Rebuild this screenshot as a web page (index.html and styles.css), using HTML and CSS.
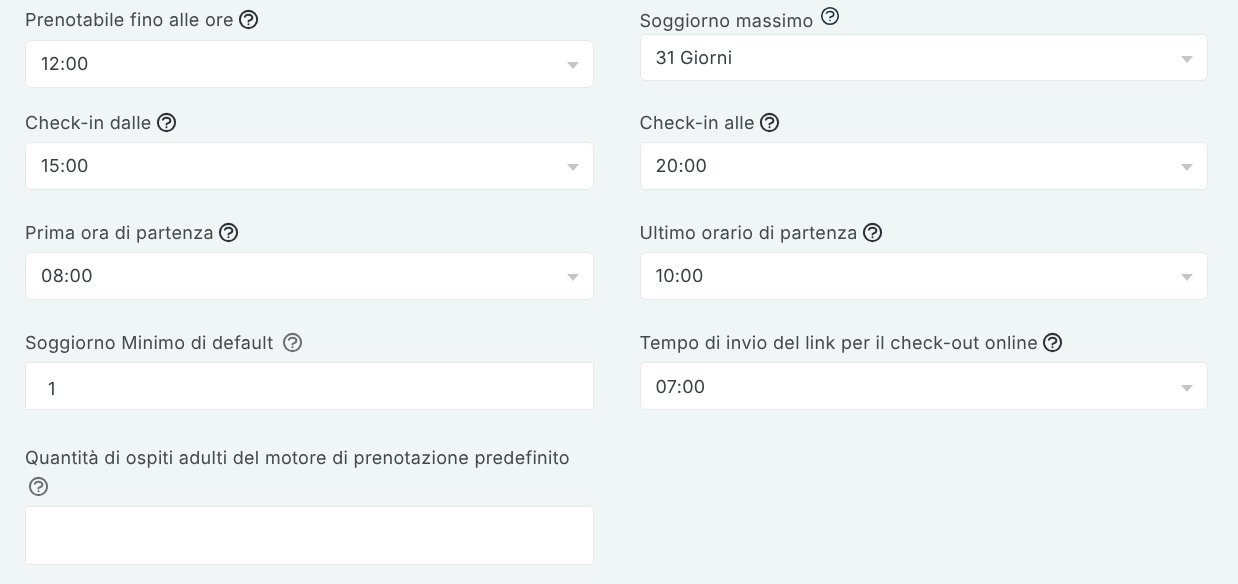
FILE: index.html
```html
<!DOCTYPE html>
<html lang="it">
<head>
<meta charset="utf-8">
<title>Impostazioni</title>
<link rel="stylesheet" href="styles.css">
</head>
<body>
<svg class="defs" aria-hidden="true"><symbol id="help" viewBox="0 0 24 24"><path fill="none" stroke="currentColor" stroke-linecap="round" stroke-linejoin="round" d="M8.228 9c.549-1.165 2.03-2 3.772-2 2.21 0 4 1.343 4 3 0 1.4-1.278 2.575-3.006 2.907-.542.104-.994.54-.994 1.093m0 3h.01M21 12a9 9 0 11-18 0 9 9 0 0118 0z"/></symbol></svg>
<main class="form">
  <div class="field first-left">
    <label class="label">Prenotabile fino alle ore <svg class="icon"><use href="#help"/></svg></label>
    <div class="select"><span>12:00</span><i class="arrow"></i></div>
  </div>
  <div class="field first-right">
    <label class="label">Soggiorno massimo <svg class="icon raised"><use href="#help"/></svg></label>
    <div class="select short"><span>31 Giorni</span><i class="arrow"></i></div>
  </div>
  <div class="field row2">
    <label class="label">Check-in dalle <svg class="icon"><use href="#help"/></svg></label>
    <div class="select"><span>15:00</span><i class="arrow"></i></div>
  </div>
  <div class="field row2">
    <label class="label">Check-in alle <svg class="icon"><use href="#help"/></svg></label>
    <div class="select"><span>20:00</span><i class="arrow"></i></div>
  </div>
  <div class="field row3">
    <label class="label">Prima ora di partenza <svg class="icon"><use href="#help"/></svg></label>
    <div class="select"><span>08:00</span><i class="arrow"></i></div>
  </div>
  <div class="field row3">
    <label class="label">Ultimo orario di partenza <svg class="icon"><use href="#help"/></svg></label>
    <div class="select"><span>10:00</span><i class="arrow"></i></div>
  </div>
  <div class="field row3">
    <label class="label">Soggiorno Minimo di default <svg class="icon muted spaced"><use href="#help"/></svg></label>
    <div class="input"><span>1</span></div>
  </div>
  <div class="field row3">
    <label class="label">Tempo di invio del link per il check-out online <svg class="icon"><use href="#help"/></svg></label>
    <div class="select lowered"><span>07:00</span><i class="arrow"></i></div>
  </div>
  <div class="field row5">
    <label class="label tall">Quantità di ospiti adulti del motore di prenotazione predefinito <svg class="icon muted"><use href="#help"/></svg></label>
    <div class="input large"></div>
  </div>
</main>
</body>
</html>
```
FILE: styles.css
```css
* { box-sizing: border-box; }
html, body { margin: 0; height: 584px; overflow: hidden; }
body {
  background: #f0f5f5;
  color: #3a3f42;
  font-family: Inter, "Liberation Sans", sans-serif;
  font-size: 18px;
  letter-spacing: 0.31px;
  text-rendering: geometricPrecision;
}
.defs { display: none; }
.form {
  display: grid;
  grid-template-columns: 569px 568.5px;
  column-gap: 45.5px;
  align-content: start;
  padding: 5px 30px 0 25px;
  will-change: transform;
}
.field { display: flex; flex-direction: column; min-width: 0; }
.first-left { padding-top: 3px; }
.first-left .label { margin-bottom: 8px; }
.first-right .label { margin-bottom: 5px; }
.row2 { margin-top: 22px; }
.row3 { margin-top: 30px; }
.row5 { margin-top: 34px; }
.label {
  display: block;
  height: 24px;
  line-height: 24px;
  margin-bottom: 7px;
  color: #44494c;
}
.row2 .label, .row3 .label { margin-top: 1px; }
.label.tall { height: auto; line-height: 29px; margin-bottom: 4px; }
.icon {
  display: inline-block;
  width: 23px;
  height: 23px;
  margin-left: -2.3px;
  vertical-align: -5px;
  color: #2a3036;
  stroke-width: 2.1;
}
.icon.raised {
  width: 22px;
  height: 22px;
  margin-left: -0.3px;
  vertical-align: -0.5px;
  color: #1c2a3a;
  stroke-width: 1.7;
}
.icon.muted { color: #6b6f72; }
.icon.spaced { margin-left: 2.2px; }
.tall .icon { margin-left: 2px; }
.select, .input {
  background: #fff;
  border: 1px solid #e6e8ea;
  height: 48px;
}
.select {
  display: flex;
  align-items: center;
  justify-content: space-between;
  padding: 0 14.5px 0 15px;
  border-radius: 6px;
}
.select.short { height: 47px; padding-top: 1px; }
.select.lowered { padding-top: 2px; }
.arrow {
  display: block;
  width: 0;
  height: 0;
  margin-top: 3px;
  border-left: 6.5px solid transparent;
  border-right: 6.5px solid transparent;
  border-top: 7px solid #c6c6c6;
}
.input { display: flex; align-items: center; padding: 6px 22px 0; }
.input.large { height: 59px; border-radius: 4px; }
```
